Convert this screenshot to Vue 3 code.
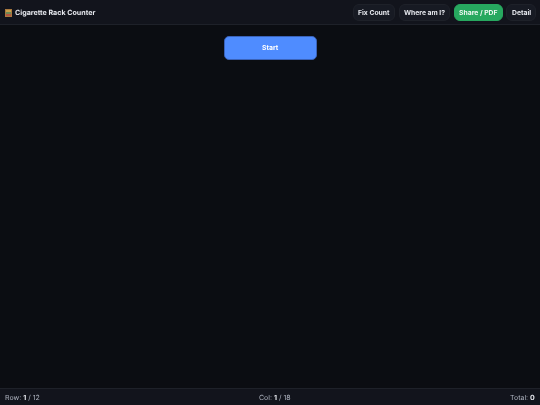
<script setup>
const buttons = [
  { label: 'Fix Count', cls: '' },
  { label: 'Where am I?', cls: '' },
  { label: 'Share / PDF', cls: 'green' },
  { label: 'Detail', cls: '' },
]
</script>

<template>
  <div class="page">
    <header class="top">
      <div class="brand">
        <svg class="logo" viewBox="0 0 7 8" width="7" height="8" aria-hidden="true">
          <rect width="7" height="8" fill="#a9793f" />
          <rect x="1" y="1" width="5" height="2" fill="#c9a04a" />
          <rect x="1" y="3" width="5" height="2" fill="#6f8a55" />
          <rect x="1" y="5" width="5" height="2" fill="#b4553f" />
        </svg>
        <span class="soft">Cigarette Rack Counter</span>
      </div>
      <nav class="actions">
        <button v-for="b in buttons" :key="b.label" class="btn" :class="b.cls">
          <span class="soft">{{ b.label }}</span>
        </button>
      </nav>
    </header>
    <main class="content">
      <button class="start"><span class="soft">Start</span></button>
    </main>
    <footer class="bottom">
      <span class="soft">Row: <b>1</b> / 12</span>
      <span class="soft">Col: <b>1</b> / 18</span>
      <span class="soft">Total: <b>0</b></span>
    </footer>
  </div>
</template>

<style>
html, body { margin: 0; background: #0b0d12; }
</style>

<style scoped>
.page {
  width: 540px;
  height: 405px;
  display: flex;
  flex-direction: column;
  background: #0b0d12;
  font-family: Inter, "Noto Sans", sans-serif;
  color: #e6e8ee;
  overflow: hidden;
  text-rendering: geometricPrecision;
}
.soft {
  display: inline-block;
  will-change: transform;
}
.top {
  height: 25px;
  box-sizing: border-box;
  display: flex;
  align-items: center;
  justify-content: space-between;
  padding: 1px 4px 0 5px;
  background: #12141c;
  border-bottom: 1px solid #1e2129;
}
.brand {
  display: flex;
  align-items: center;
  gap: 3px;
  font-size: 7.1px;
  font-weight: 700;
}
.logo { display: block; }
.actions { display: flex; gap: 3.5px; }
.btn {
  height: 17px;
  padding: 0 4.3px;
  border: 1px solid #1e2129;
  border-radius: 6px;
  background: #171a23;
  color: #e6e8ee;
  font: 700 6.8px Inter, sans-serif;
}
.btn.green {
  background: #27a85f;
  border-color: #27a85f;
  color: #eef8f2;
}
.content {
  flex: 1;
  display: flex;
  justify-content: center;
  align-items: flex-start;
  padding-top: 10.5px;
}
.start {
  width: 93px;
  height: 24px;
  border: 1px solid #3a62b8;
  border-radius: 5px;
  background: #4f8cff;
  color: #fff;
  font: 700 6.8px Inter, sans-serif;
}
.bottom {
  height: 17px;
  box-sizing: border-box;
  display: flex;
  align-items: center;
  justify-content: space-between;
  padding: 0 5px;
  background: #12141c;
  border-top: 1px solid #1e2129;
  color: #aeb3bf;
  font-size: 7px;
}
.bottom b { color: #e6e8ee; }
</style>
